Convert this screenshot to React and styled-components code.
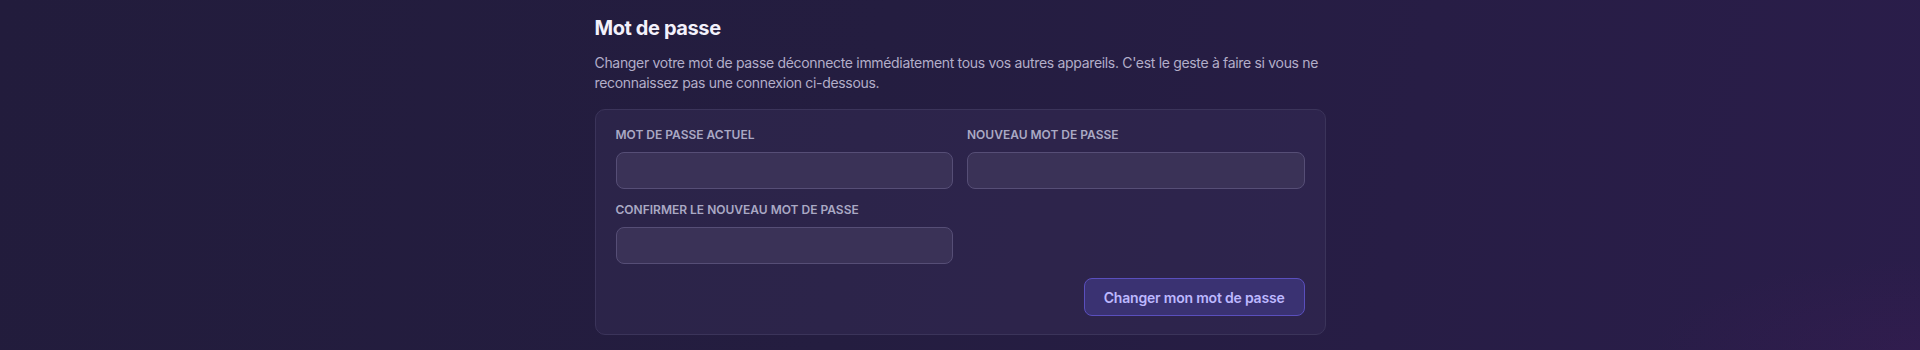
import React from "react"
import styled, { createGlobalStyle } from "styled-components"

const GlobalStyle = createGlobalStyle`
  html, body {
    margin: 0;
    padding: 0;
  }
  body {
    font-family: "Inter", "Noto Sans", sans-serif;
    background: #231c3e;
    -webkit-font-smoothing: antialiased;
  }
`

export default function App() {
  return (
    <>
      <GlobalStyle />
      <Page>
        <Section>
          <Title>Mot de passe</Title>
          <Description>
            Changer votre mot de passe déconnecte immédiatement tous vos autres
            appareils. C'est le geste à faire si vous ne reconnaissez pas une
            connexion ci-dessous.
          </Description>
          <Card>
            <FieldGrid>
              <Field>
                <Label>Mot de passe actuel</Label>
                <Input type="password" />
              </Field>
              <Field>
                <Label>Nouveau mot de passe</Label>
                <Input type="password" />
              </Field>
              <Field>
                <Label>Confirmer le nouveau mot de passe</Label>
                <Input type="password" />
              </Field>
            </FieldGrid>
            <Actions>
              <Button>Changer mon mot de passe</Button>
            </Actions>
          </Card>
        </Section>
      </Page>
    </>
  )
}

const Page = styled.div`
  min-height: 350px;
  box-sizing: border-box;
  padding-top: 14px;
  background:
    radial-gradient(ellipse 380px 130px at 100% 100%, rgba(58, 28, 84, 0.4), transparent 70%),
    linear-gradient(100deg, #221c3c 0%, #241d40 45%, #2a1d4a 100%);
`

const Section = styled.div`
  width: 731px;
  margin: 0 auto;
`

const Title = styled.h2`
  margin: 0;
  font-size: 20px;
  line-height: 28px;
  font-weight: 700;
  letter-spacing: -0.4px;
  color: #f3f1fb;
`

const Description = styled.p`
  margin: 11px 0 16px;
  font-size: 14px;
  line-height: 20px;
  letter-spacing: -0.32px;
  color: #b3aec9;
`

const Card = styled.div`
  box-sizing: border-box;
  padding: 18px 20px 18px;
  border: 1px solid #3b345a;
  border-radius: 10px;
  background: rgba(62, 54, 96, 0.32);
`

const FieldGrid = styled.div`
  display: grid;
  grid-template-columns: 1fr 1fr;
  column-gap: 14px;
  row-gap: 14px;
`

const Field = styled.div`
  display: flex;
  flex-direction: column;
  gap: 10px;
`

const Label = styled.label`
  font-size: 12px;
  line-height: 14px;
  font-weight: 600;
  text-transform: uppercase;
  letter-spacing: 0;
  color: #aaa9c4;
`

const Input = styled.input`
  box-sizing: border-box;
  height: 37px;
  width: 100%;
  padding: 0 12px;
  border: 1px solid #564e76;
  border-radius: 8px;
  background: #3a3257;
  color: #f3f1fb;
  font: inherit;
  outline: none;
`

const Actions = styled.div`
  display: flex;
  justify-content: flex-end;
  margin-top: 14px;
`

const Button = styled.button`
  box-sizing: border-box;
  height: 38px;
  padding: 0 19px;
  border: 1px solid #5a4fbd;
  border-radius: 8px;
  background: #3a3272;
  color: #bdb8ff;
  font-family: inherit;
  font-size: 14px;
  font-weight: 600;
  letter-spacing: -0.2px;
  cursor: pointer;
`
